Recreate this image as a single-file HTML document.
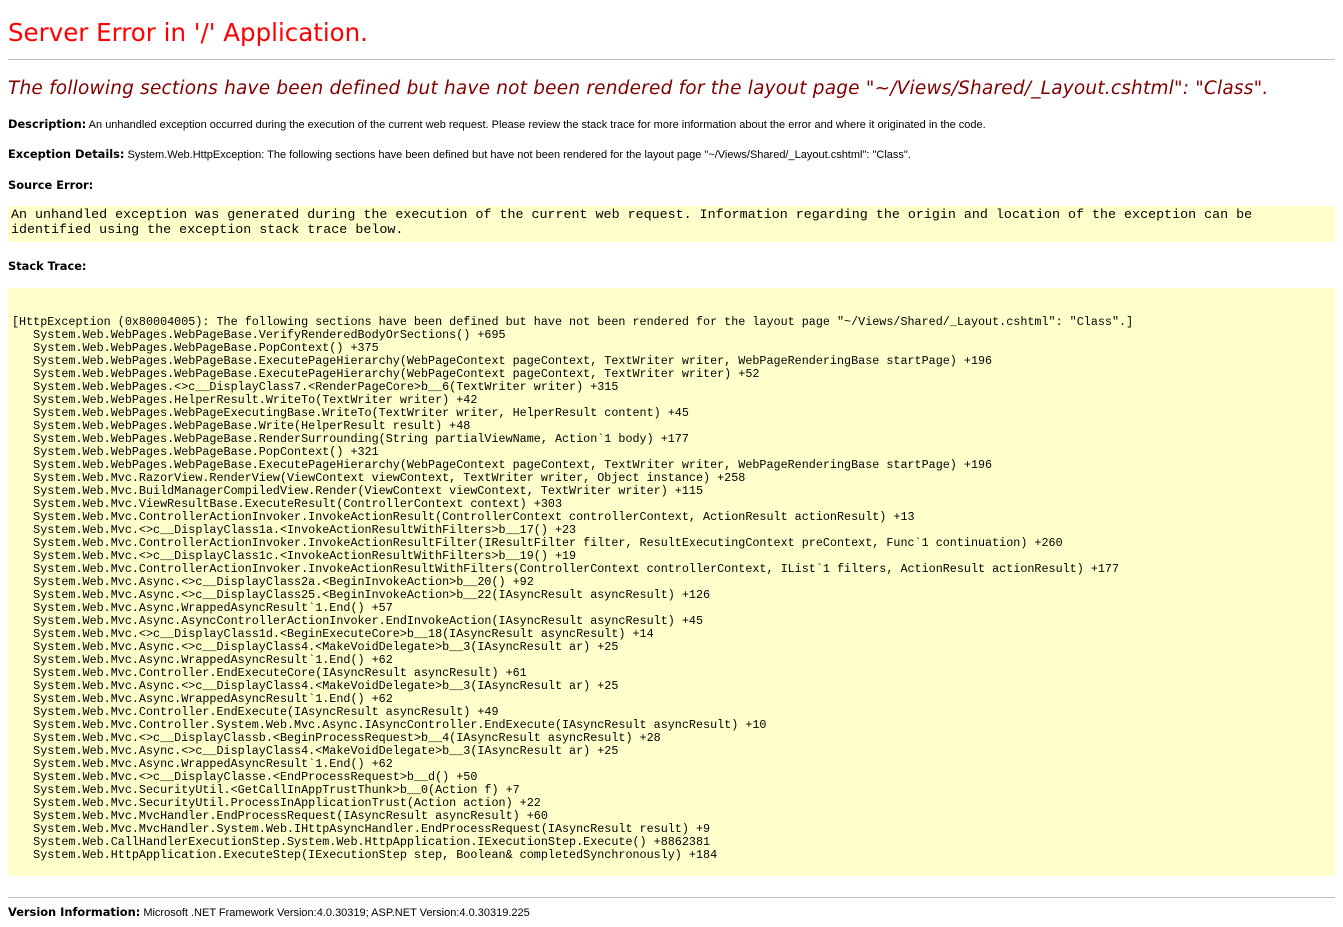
<!DOCTYPE html>
<html><head><meta charset="utf-8"><style>
body{margin:0;background:#fff;color:#000;width:1343px;height:927px;position:relative;overflow:hidden;font-family:"Liberation Sans",Arial,sans-serif;font-size:11px}
.a{position:absolute;white-space:nowrap}
h1{position:absolute;left:8px;top:17px;margin:0;font-family:"DejaVu Sans",sans-serif;font-weight:normal;font-size:24.5px;color:#f00;line-height:32px}
h2{position:absolute;left:8px;top:75px;margin:0;font-family:"DejaVu Sans",sans-serif;font-weight:normal;font-style:italic;font-size:18.5px;color:#800000;line-height:28px;letter-spacing:0.2px}
b{font-family:"DejaVu Sans",sans-serif;font-size:11.4px}
.hr{position:absolute;left:8px;width:1327px;height:1px;background:#c0c0c0}
.box{position:absolute;left:8px;width:1327px;background:#ffffcc}
pre{margin:0;font-family:"Liberation Mono","Courier New",monospace;font-size:11.67px;white-space:pre}
</style></head><body>
<h1>Server Error in '/' Application.</h1>
<div class="hr" style="top:59px"></div>
<h2>The following sections have been defined but have not been rendered for the layout page "~/Views/Shared/_Layout.cshtml": "Class".</h2>
<div class="a" style="left:8px;top:117px"><b>Description:</b> An unhandled exception occurred during the execution of the current web request. Please review the stack trace for more information about the error and where it originated in the code.</div>
<div class="a" style="left:8px;top:147px"><b>Exception Details:</b> System.Web.HttpException: The following sections have been defined but have not been rendered for the layout page "~/Views/Shared/_Layout.cshtml": "Class".</div>
<div class="a" style="left:8px;top:178px"><b>Source Error:</b></div>
<div class="box" style="top:206px;height:36px"><pre style="position:absolute;left:3px;top:2px;line-height:15px;font-size:13.35px">An unhandled exception was generated during the execution of the current web request. Information regarding the origin and location of the exception can be
identified using the exception stack trace below.</pre></div>
<div class="a" style="left:8px;top:259px"><b>Stack Trace:</b></div>
<div class="box" style="top:288px;height:588px"><pre style="position:absolute;left:4px;top:28px;line-height:13px;font-size:11.75px">[HttpException (0x80004005): The following sections have been defined but have not been rendered for the layout page "~/Views/Shared/_Layout.cshtml": "Class".]
   System.Web.WebPages.WebPageBase.VerifyRenderedBodyOrSections() +695
   System.Web.WebPages.WebPageBase.PopContext() +375
   System.Web.WebPages.WebPageBase.ExecutePageHierarchy(WebPageContext pageContext, TextWriter writer, WebPageRenderingBase startPage) +196
   System.Web.WebPages.WebPageBase.ExecutePageHierarchy(WebPageContext pageContext, TextWriter writer) +52
   System.Web.WebPages.&lt;&gt;c__DisplayClass7.&lt;RenderPageCore&gt;b__6(TextWriter writer) +315
   System.Web.WebPages.HelperResult.WriteTo(TextWriter writer) +42
   System.Web.WebPages.WebPageExecutingBase.WriteTo(TextWriter writer, HelperResult content) +45
   System.Web.WebPages.WebPageBase.Write(HelperResult result) +48
   System.Web.WebPages.WebPageBase.RenderSurrounding(String partialViewName, Action`1 body) +177
   System.Web.WebPages.WebPageBase.PopContext() +321
   System.Web.WebPages.WebPageBase.ExecutePageHierarchy(WebPageContext pageContext, TextWriter writer, WebPageRenderingBase startPage) +196
   System.Web.Mvc.RazorView.RenderView(ViewContext viewContext, TextWriter writer, Object instance) +258
   System.Web.Mvc.BuildManagerCompiledView.Render(ViewContext viewContext, TextWriter writer) +115
   System.Web.Mvc.ViewResultBase.ExecuteResult(ControllerContext context) +303
   System.Web.Mvc.ControllerActionInvoker.InvokeActionResult(ControllerContext controllerContext, ActionResult actionResult) +13
   System.Web.Mvc.&lt;&gt;c__DisplayClass1a.&lt;InvokeActionResultWithFilters&gt;b__17() +23
   System.Web.Mvc.ControllerActionInvoker.InvokeActionResultFilter(IResultFilter filter, ResultExecutingContext preContext, Func`1 continuation) +260
   System.Web.Mvc.&lt;&gt;c__DisplayClass1c.&lt;InvokeActionResultWithFilters&gt;b__19() +19
   System.Web.Mvc.ControllerActionInvoker.InvokeActionResultWithFilters(ControllerContext controllerContext, IList`1 filters, ActionResult actionResult) +177
   System.Web.Mvc.Async.&lt;&gt;c__DisplayClass2a.&lt;BeginInvokeAction&gt;b__20() +92
   System.Web.Mvc.Async.&lt;&gt;c__DisplayClass25.&lt;BeginInvokeAction&gt;b__22(IAsyncResult asyncResult) +126
   System.Web.Mvc.Async.WrappedAsyncResult`1.End() +57
   System.Web.Mvc.Async.AsyncControllerActionInvoker.EndInvokeAction(IAsyncResult asyncResult) +45
   System.Web.Mvc.&lt;&gt;c__DisplayClass1d.&lt;BeginExecuteCore&gt;b__18(IAsyncResult asyncResult) +14
   System.Web.Mvc.Async.&lt;&gt;c__DisplayClass4.&lt;MakeVoidDelegate&gt;b__3(IAsyncResult ar) +25
   System.Web.Mvc.Async.WrappedAsyncResult`1.End() +62
   System.Web.Mvc.Controller.EndExecuteCore(IAsyncResult asyncResult) +61
   System.Web.Mvc.Async.&lt;&gt;c__DisplayClass4.&lt;MakeVoidDelegate&gt;b__3(IAsyncResult ar) +25
   System.Web.Mvc.Async.WrappedAsyncResult`1.End() +62
   System.Web.Mvc.Controller.EndExecute(IAsyncResult asyncResult) +49
   System.Web.Mvc.Controller.System.Web.Mvc.Async.IAsyncController.EndExecute(IAsyncResult asyncResult) +10
   System.Web.Mvc.&lt;&gt;c__DisplayClassb.&lt;BeginProcessRequest&gt;b__4(IAsyncResult asyncResult) +28
   System.Web.Mvc.Async.&lt;&gt;c__DisplayClass4.&lt;MakeVoidDelegate&gt;b__3(IAsyncResult ar) +25
   System.Web.Mvc.Async.WrappedAsyncResult`1.End() +62
   System.Web.Mvc.&lt;&gt;c__DisplayClasse.&lt;EndProcessRequest&gt;b__d() +50
   System.Web.Mvc.SecurityUtil.&lt;GetCallInAppTrustThunk&gt;b__0(Action f) +7
   System.Web.Mvc.SecurityUtil.ProcessInApplicationTrust(Action action) +22
   System.Web.Mvc.MvcHandler.EndProcessRequest(IAsyncResult asyncResult) +60
   System.Web.Mvc.MvcHandler.System.Web.IHttpAsyncHandler.EndProcessRequest(IAsyncResult result) +9
   System.Web.CallHandlerExecutionStep.System.Web.HttpApplication.IExecutionStep.Execute() +8862381
   System.Web.HttpApplication.ExecuteStep(IExecutionStep step, Boolean&amp; completedSynchronously) +184</pre></div>
<div class="hr" style="top:897px"></div>
<div class="a" style="left:8px;top:905px"><b>Version Information:</b> Microsoft .NET Framework Version:4.0.30319; ASP.NET Version:4.0.30319.225</div>
</body></html>
